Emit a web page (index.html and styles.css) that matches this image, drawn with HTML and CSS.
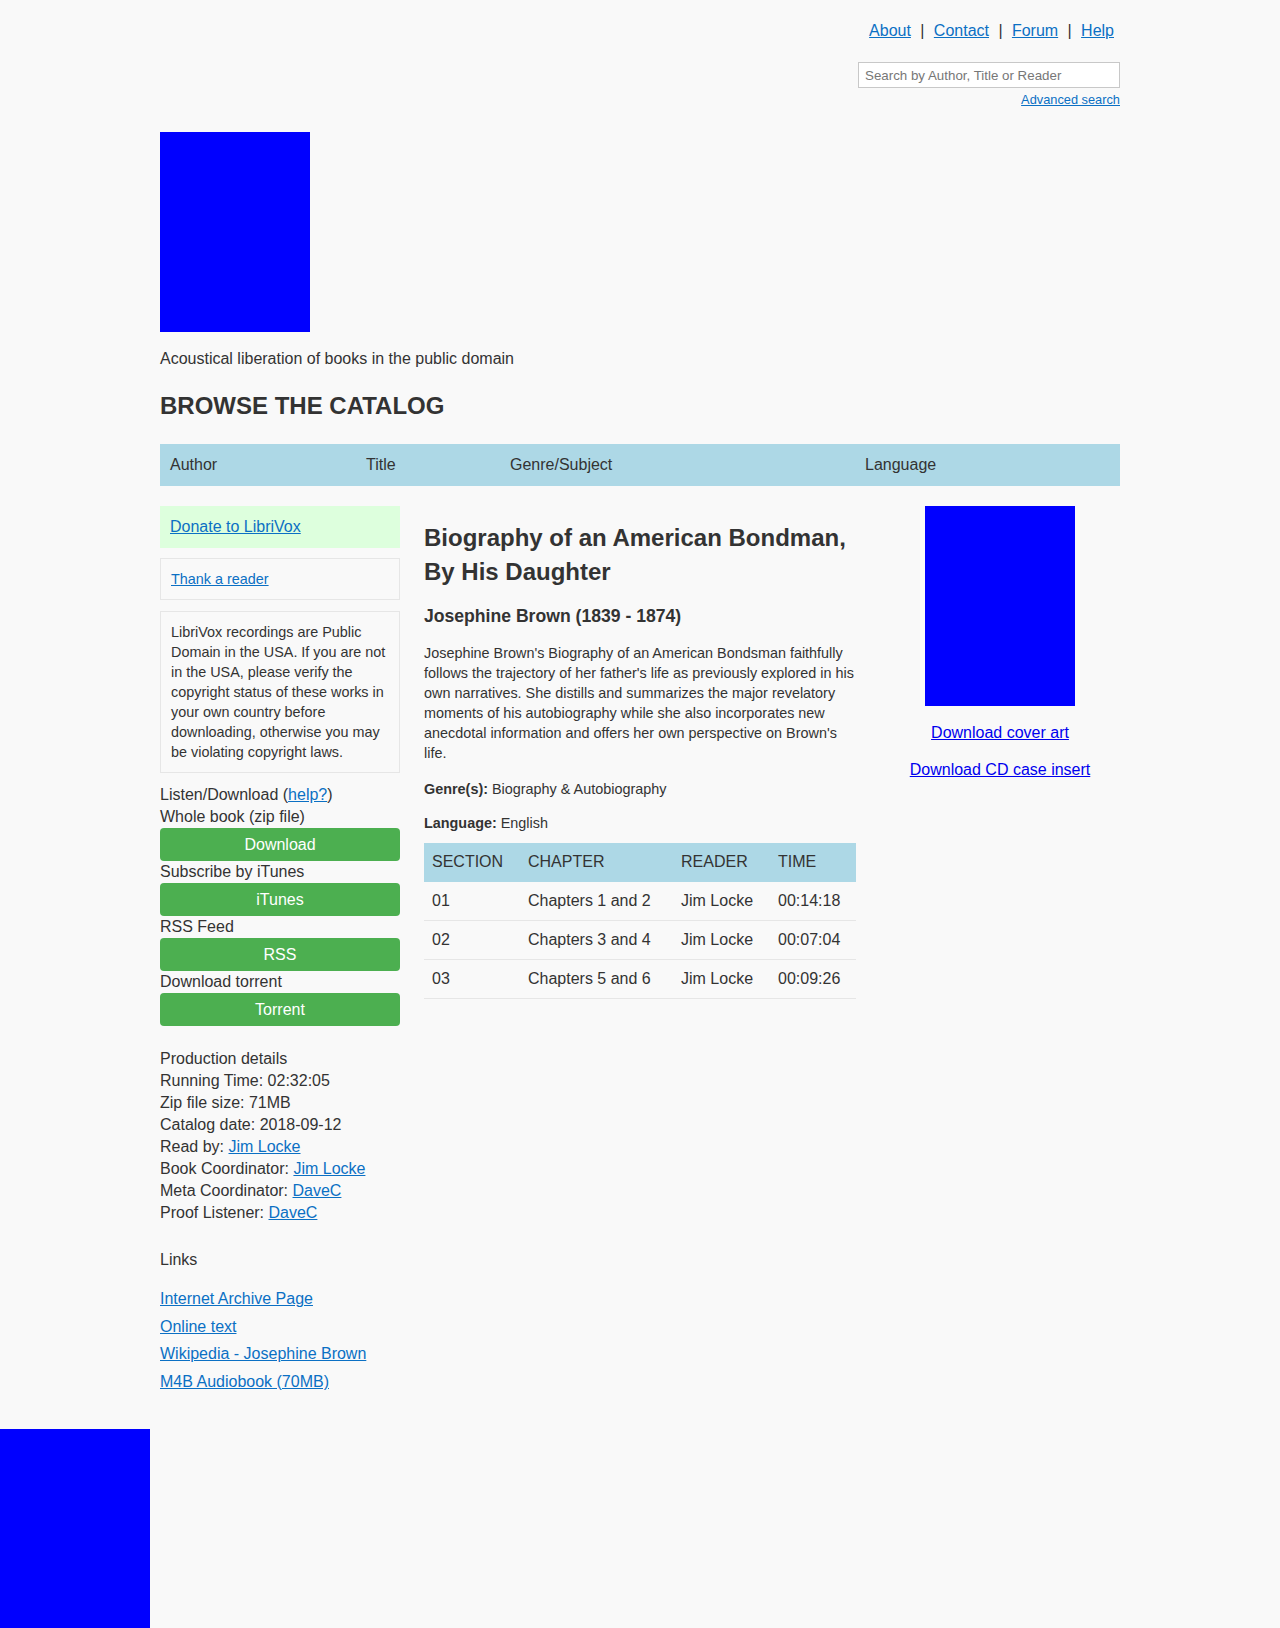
FILE: index.html
```html
<!DOCTYPE html>
<html lang="en">
<head>
<meta charset="utf-8">
<title>LibriVox - Biography of an American Bondman, By His Daughter</title>
<link rel="stylesheet" href="styles.css">
</head>
<body>
<div class="container">
  <header class="top">
    <nav class="topnav">
      <a href="#">About</a><span class="sep">|</span><a href="#">Contact</a><span class="sep">|</span><a href="#">Forum</a><span class="sep">|</span><a href="#">Help</a>
    </nav>
    <form class="search">
      <input type="text" placeholder="Search by Author, Title or Reader">
    </form>
    <div class="adv"><a href="#">Advanced search</a></div>
    <div class="logo"></div>
    <p class="tagline">Acoustical liberation of books in the public domain</p>
    <h1 class="browse">BROWSE THE CATALOG</h1>
    <div class="catnav">
      <span>Author</span><span>Title</span><span>Genre/Subject</span><span>Language</span>
    </div>
  </header>

  <div class="main">
    <aside class="left">
      <div class="donate"><a href="#">Donate to LibriVox</a></div>
      <div class="thank"><a href="#">Thank a reader</a></div>
      <div class="disclaimer">LibriVox recordings are Public Domain in the USA. If you are not in the USA, please verify the copyright status of these works in your own country before downloading, otherwise you may be violating copyright laws.</div>
      <div class="listen">
        <div class="line">Listen/Download (<a href="#">help?</a>)</div>
        <div class="line">Whole book (zip file)</div>
        <a class="btn" href="#">Download</a>
        <div class="line">Subscribe by iTunes</div>
        <a class="btn" href="#">iTunes</a>
        <div class="line">RSS Feed</div>
        <a class="btn" href="#">RSS</a>
        <div class="line">Download torrent</div>
        <a class="btn" href="#">Torrent</a>
      </div>
      <div class="details">
        <div class="line">Production details</div>
        <div class="line">Running Time: 02:32:05</div>
        <div class="line">Zip file size: 71MB</div>
        <div class="line">Catalog date: 2018-09-12</div>
        <div class="line">Read by: <a href="#">Jim Locke</a></div>
        <div class="line">Book Coordinator: <a href="#">Jim Locke</a></div>
        <div class="line">Meta Coordinator: <a href="#">DaveC</a></div>
        <div class="line">Proof Listener: <a href="#">DaveC</a></div>
      </div>
      <div class="links-label line">Links</div>
      <ul class="links">
        <li><a href="#">Internet Archive Page</a></li>
        <li><a href="#">Online text</a></li>
        <li><a href="#">Wikipedia - Josephine Brown</a></li>
        <li><a href="#">M4B Audiobook (70MB)</a></li>
      </ul>
    </aside>

    <section class="middle">
      <h2 class="title">Biography of an American Bondman, By His Daughter</h2>
      <div class="author">Josephine Brown (1839 - 1874)</div>
      <p class="desc">Josephine Brown's Biography of an American Bondsman faithfully follows the trajectory of her father's life as previously explored in his own narratives. She distills and summarizes the major revelatory moments of his autobiography while she also incorporates new anecdotal information and offers her own perspective on Brown's life.</p>
      <p class="meta genre"><b>Genre(s):</b> Biography &amp; Autobiography</p>
      <p class="meta lang"><b>Language:</b> English</p>
      <table class="chapters">
        <thead>
          <tr><th class="c1">SECTION</th><th class="c2">CHAPTER</th><th class="c3">READER</th><th class="c4">TIME</th></tr>
        </thead>
        <tbody>
          <tr><td>01</td><td>Chapters 1 and 2</td><td>Jim Locke</td><td>00:14:18</td></tr>
          <tr><td>02</td><td>Chapters 3 and 4</td><td>Jim Locke</td><td>00:07:04</td></tr>
          <tr><td>03</td><td>Chapters 5 and 6</td><td>Jim Locke</td><td>00:09:26</td></tr>
        </tbody>
      </table>
    </section>

    <aside class="right">
      <div class="cover"></div>
      <p><a href="#">Download cover art</a></p>
      <p><a href="#">Download CD case insert</a></p>
    </aside>
  </div>
</div>
<div class="footer-img"></div>
</body>
</html>
```

FILE: styles.css
```css
* { box-sizing: border-box; }

html, body {
  margin: 0;
  padding: 0;
  background: #f9f9f9;
}

body {
  font-family: "Liberation Sans", Arial, Helvetica, sans-serif;
  font-size: 16px;
  line-height: 22px;
  color: #333;
}

a { color: #0b70c4; }

.container {
  width: 960px;
  margin: 0 auto;
}

/* header */
.topnav {
  padding-top: 20px;
  padding-right: 6px;
  display: flex;
  justify-content: flex-end;
  gap: 9.4px;
  line-height: 22px;
}

.search {
  margin: 20px 0 0;
  display: flex;
  justify-content: flex-end;
}

.search input {
  width: 262px;
  height: 26px;
  border: 1px solid #c8c8c8;
  background: #fff;
  padding: 0 6px;
  font-family: "Liberation Sans", Arial, sans-serif;
  font-size: 13.33px;
  color: #333;
}

.search input::placeholder { color: #777; }

.adv {
  margin-top: 4px;
  text-align: right;
  font-size: 12.8px;
  line-height: 16px;
}

.logo {
  margin-top: 24px;
  width: 150px;
  height: 200px;
  background: #0000ff;
}

.tagline {
  margin: 16px 0 0;
  line-height: 22px;
}

.browse {
  margin: 22px 0 0;
  font-size: 24px;
  line-height: 28px;
  font-weight: bold;
}

.catnav {
  margin-top: 24px;
  height: 42px;
  background: #add8e6;
  display: grid;
  grid-template-columns: 196px 144px 355px 1fr;
  align-items: center;
}

.catnav span { padding-left: 10px; }

/* main */
.main {
  margin-top: 20px;
  display: flex;
  gap: 24px;
  align-items: flex-start;
}

.left { width: 240px; flex: none; }
.middle { width: 432px; flex: none; }
.right { width: 240px; flex: none; text-align: center; }

.donate {
  background: #ddffdd;
  padding: 10px;
  line-height: 22px;
}

.thank {
  margin-top: 10px;
  border: 1px solid #e6e6e6;
  padding: 10px;
  font-size: 14.4px;
  line-height: 20px;
}

.disclaimer {
  margin-top: 11px;
  border: 1px solid #e6e6e6;
  padding: 10px;
  font-size: 14.4px;
  line-height: 20px;
}

.listen { margin-top: 11px; }

.line { line-height: 22px; }

.btn {
  display: block;
  height: 33px;
  line-height: 33px;
  background: #4caf50;
  color: #fff;
  text-decoration: none;
  text-align: center;
  border-radius: 4px;
}

.details { margin-top: 22px; }

.links-label { margin-top: 25px; }

.links {
  list-style: none;
  margin: 14px 0 0;
  padding: 0;
}

.links li { line-height: 27.7px; }

/* middle */
.title {
  margin: 15px 0 0;
  font-size: 24px;
  line-height: 34px;
  font-weight: bold;
}

.author {
  margin-top: 15px;
  font-size: 17.6px;
  line-height: 24px;
  font-weight: bold;
}

.desc {
  margin: 15px 0 0;
  font-size: 14.4px;
  line-height: 20px;
}

.meta {
  margin: 0;
  font-size: 14.4px;
  line-height: 20px;
}

.genre { margin-top: 16px; }
.lang { margin-top: 14px; }

.chapters {
  margin-top: 10px;
  width: 432px;
  border-collapse: collapse;
  table-layout: fixed;
}

.chapters th {
  background: #add8e6;
  font-weight: normal;
  text-align: left;
  padding: 8px 8px 9px;
  line-height: 22px;
}

.chapters td {
  padding: 8px;
  line-height: 22px;
  border-bottom: 1px solid #e6e6e6;
}

.c1 { width: 96px; }
.c2 { width: 153px; }
.c3 { width: 97px; }
.c4 { width: 86px; }

/* right */
.cover {
  width: 150px;
  height: 200px;
  background: #0000ff;
  margin: 0 auto;
}

.right p {
  margin: 16px 0 0;
  line-height: 21px;
}

.right a { color: #0000ee; }

.footer-img {
  margin-top: 33px;
  width: 150px;
  height: 200px;
  background: #0000ff;
}
```
